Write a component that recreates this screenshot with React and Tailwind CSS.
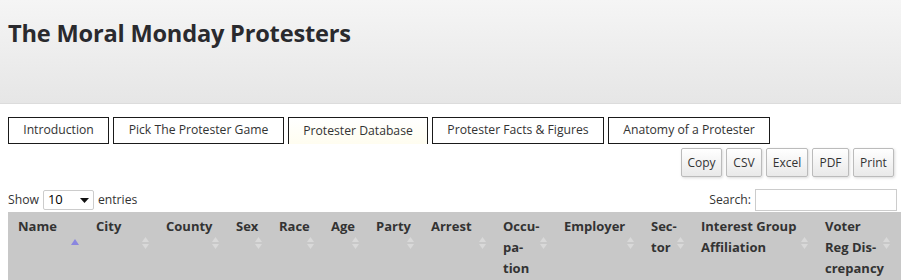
import React from "react";

const tabs = [
  { label: "Introduction", w: 101 },
  { label: "Pick The Protester Game", w: 171 },
  { label: "Protester Database", w: 140, active: true },
  { label: "Protester Facts & Figures", w: 172 },
  { label: "Anatomy of a Protester", w: 162 },
];

const buttons = [
  { label: "Copy", w: 41 },
  { label: "CSV", w: 36 },
  { label: "Excel", w: 42 },
  { label: "PDF", w: 37 },
  { label: "Print", w: 41 },
];

const cols = [
  { lines: ["Name"], w: 78, sorted: true },
  { lines: ["City"], w: 70 },
  { lines: ["County"], w: 70 },
  { lines: ["Sex"], w: 43 },
  { lines: ["Race"], w: 52 },
  { lines: ["Age"], w: 45 },
  { lines: ["Party"], w: 55 },
  { lines: ["Arrest"], w: 72 },
  { lines: ["Occu-", "pa-", "tion"], w: 61 },
  { lines: ["Employer"], w: 87 },
  { lines: ["Sec-", "tor"], w: 50 },
  { lines: ["Interest Group", "Affiliation"], w: 124 },
  { lines: ["Voter", "Reg Dis-", "crepancy"], w: 82 },
];

function SortIcon({ sorted }) {
  if (sorted) {
    return (
      <svg width="8" height="6" viewBox="0 0 8 6" className="absolute right-[7px] top-[27px]">
        <polygon points="4,0 8,6 0,6" fill="#8a86e0" />
      </svg>
    );
  }
  return (
    <svg width="7" height="12" viewBox="0 0 7 12" className="absolute right-[7px] top-[25px]">
      <polygon points="3.5,0 7,5 0,5" fill="#d9d9d9" />
      <polygon points="3.5,12 7,7 0,7" fill="#d9d9d9" />
    </svg>
  );
}

export default function App() {
  return (
    <div className="w-[901px] h-[280px] overflow-hidden bg-white text-[#333] font-['Open_Sans',sans-serif]">
      <div className="h-[104px] bg-gradient-to-b from-[#f5f5f5] to-[#e6e6e6] border-b border-[#dcdcdc] px-2 pt-[16px]">
        <h1 className="text-[23.6px] leading-[34px] font-bold text-[#2a2a2e] tracking-[-0.2px]">
          The Moral Monday Protesters
        </h1>
      </div>
      <div className="flex gap-[4px] pl-2 mt-[13px]">
        {tabs.map((t) => (
          <div
            key={t.label}
            style={{ width: t.w }}
            className={
              "h-[27px] flex items-center justify-center text-[12.2px] border border-[#1a1a1a] " +
              (t.active
                ? "border-b-0 bg-gradient-to-b from-white to-[#fffdf0]"
                : "bg-white")
            }
          >
            {t.label}
          </div>
        ))}
      </div>
      <div className="flex justify-end gap-[4px] pr-[7px] mt-[4px]">
        {buttons.map((b) => (
          <div
            key={b.label}
            style={{ width: b.w }}
            className="h-[29px] flex items-center justify-center text-[12px] text-[#333] border border-[#bbb] rounded-[2px] bg-gradient-to-b from-white to-[#e9e9e9] shadow-[1px_1px_3px_rgba(0,0,0,0.15)]"
          >
            {b.label}
          </div>
        ))}
      </div>
      <div className="flex items-center justify-between pl-2 pr-[4px] mt-[12px] h-[22px] text-[12.2px]">
        <div className="flex items-center">
          <span>Show</span>
          <div className="ml-[4px] w-[51px] h-[20px] border border-[#ccc] rounded-[2px] flex items-center justify-between pl-[4px] pr-[4px] bg-white">
            <span className="text-[13px] text-black">10</span>
            <svg width="9" height="5" viewBox="0 0 9 5">
              <polygon points="0,0 9,0 4.5,5" fill="#111" />
            </svg>
          </div>
          <span className="ml-[4px]">entries</span>
        </div>
        <div className="flex items-center">
          <span>Search:</span>
          <div className="ml-[4px] w-[142px] h-[22px] border border-[#ccc] bg-white" />
        </div>
      </div>
      <div className="ml-2 mt-[1px] flex bg-[#c8c8c8] h-[90px]">
        {cols.map((c, i) => (
          <div
            key={i}
            style={{ width: c.w }}
            className="relative shrink-0 pl-[10px] pt-[4px] text-[13px] font-bold leading-[21px] text-[#333]"
          >
            {c.lines.map((l, j) => (
              <div key={j} className="whitespace-nowrap">{l}</div>
            ))}
            <SortIcon sorted={c.sorted} />
          </div>
        ))}
      </div>
    </div>
  );
}
